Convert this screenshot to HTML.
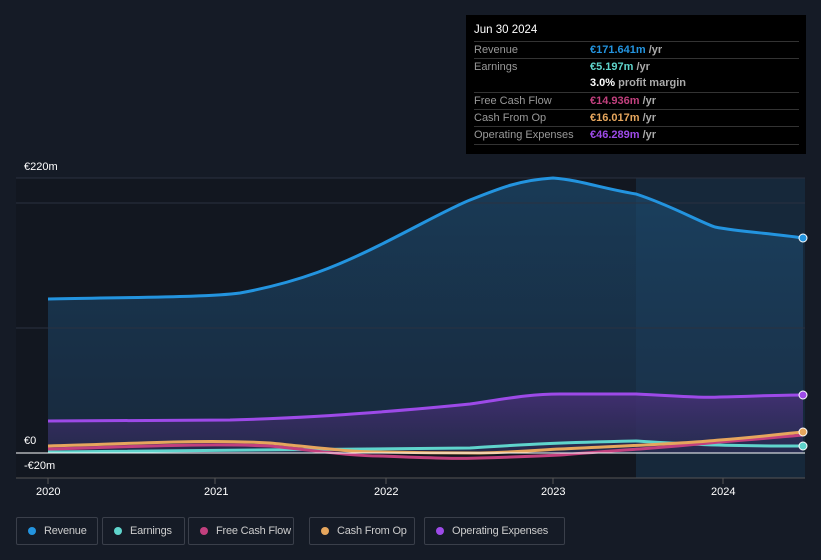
<!DOCTYPE html>
<html><head><meta charset="utf-8"><style>
body{margin:0;background:#151b26;width:821px;height:560px;overflow:hidden;font-family:"Liberation Sans",sans-serif;position:relative}
.tip{position:absolute;left:466px;top:15px;width:340px;height:139px;background:#000;color:#fff;font-size:11px}
.tip .h{position:absolute;left:8px;top:9px;font-size:11.5px}
.row{position:absolute;left:8px;width:325px;border-top:1px solid #333;height:17px;line-height:17px;color:#999}
.row b{position:absolute;left:116px;font-weight:bold}
.row span{color:#aaa}
.lg{position:absolute;top:517px;height:28px;border:1px solid #3a3f4a;border-radius:2px;color:#ccc;font-size:11px;letter-spacing:-0.2px;line-height:26px;box-sizing:border-box;padding-left:27px;white-space:nowrap;overflow:hidden}
.lg i{position:absolute;left:11px;top:9px;width:8px;height:8px;border-radius:50%}
.ax{position:absolute;color:#fff;font-size:11px}
</style></head><body>
<svg width="821" height="560" style="position:absolute;left:0;top:0">
<defs>
<linearGradient id="r" x1="0" y1="0" x2="0" y2="1"><stop offset="0" stop-color="#1c4a6e" stop-opacity=".7"/><stop offset="1" stop-color="#1c3550" stop-opacity=".6"/></linearGradient>
<linearGradient id="o" x1="0" y1="0" x2="0" y2="1"><stop offset="0" stop-color="#4a2f7a" stop-opacity=".8"/><stop offset="1" stop-color="#2e2a55" stop-opacity=".6"/></linearGradient>
</defs>
<rect x="16" y="178" width="620" height="300" fill="#121720"/>
<rect x="636" y="178" width="169" height="300" fill="#16283a"/>
<path d="M48,299 C150,297 210,297 240,293 C300,282 340,265 380,245 C420,225 450,208 470,200 C500,188 520,180 553,178 C580,180 600,188 636,194 C670,205 700,222 715,227 C740,232 770,233 803,238 L803,453 L48,453Z" fill="url(#r)"/>
<path d="M48,421 L230,420 C300,418 340,415 380,412 C430,408 450,406 470,404 C510,398 530,394 560,394 L636,394 C680,396 700,398 720,397 C760,396 780,395 803,395 L803,453 L48,453Z" fill="url(#o)"/>
<g stroke="#2a3140" stroke-width="1"><line x1="16" y1="178" x2="805" y2="178"/><line x1="16" y1="203" x2="805" y2="203"/><line x1="16" y1="328" x2="805" y2="328"/></g>
<line x1="16" y1="478" x2="805" y2="478" stroke="#555" stroke-width="1"/>
<path d="M48,299 C150,297 210,297 240,293 C300,282 340,265 380,245 C420,225 450,208 470,200 C500,188 520,180 553,178 C580,180 600,188 636,194 C670,205 700,222 715,227 C740,232 770,233 803,238" fill="none" stroke="#2394df" stroke-width="3"/>
<path d="M48,421 L230,420 C300,418 340,415 380,412 C430,408 450,406 470,404 C510,398 530,394 560,394 L636,394 C680,396 700,398 720,397 C760,396 780,395 803,395" fill="none" stroke="#9d4ae8" stroke-width="3"/>
<path d="M48,452 C150,451 300,450 470,448 C520,445 540,443 636,441 C670,443 700,446 803,446" fill="none" stroke="#5fd4cc" stroke-width="3"/>
<path d="M48,449 C130,447 200,443 270,446 C320,451 350,456 380,456 C430,458 460,459 480,458 C520,457 540,456 560,455 C600,452 620,450 640,449 C680,446 700,444 720,442 C760,439 790,436 803,435" fill="none" stroke="#c2407e" stroke-width="3"/>
<path d="M48,446 C130,444 200,439 270,443 C320,448 350,452 380,452 C430,453 460,453 480,453 C520,452 540,450 560,449 C620,446 680,444 720,440 C760,437 790,433 803,432" fill="none" stroke="#e6a65d" stroke-width="3"/>
<line x1="16" y1="453" x2="805" y2="453" stroke="#fff" stroke-width="1"/>
<circle cx="803" cy="238" r="4" fill="#2394df" stroke="#fff"/>
<circle cx="803" cy="395" r="4" fill="#9d4ae8" stroke="#fff"/>
<circle cx="803" cy="432" r="4" fill="#e6a65d" stroke="#fff"/>
<circle cx="803" cy="446" r="4" fill="#5fd4cc" stroke="#fff"/>
<g stroke="#555"><line x1="48" y1="478" x2="48" y2="484"/><line x1="215" y1="478" x2="215" y2="484"/><line x1="386" y1="478" x2="386" y2="484"/><line x1="553" y1="478" x2="553" y2="484"/><line x1="723" y1="478" x2="723" y2="484"/></g>
</svg>
<div class="ax" style="left:24px;top:161px">€220m</div>
<div class="ax" style="left:24px;top:435px">€0</div>
<div class="ax" style="left:24px;top:460px">-€20m</div>
<div class="ax" style="left:36px;top:486px">2020</div>
<div class="ax" style="left:204px;top:486px">2021</div>
<div class="ax" style="left:374px;top:486px">2022</div>
<div class="ax" style="left:541px;top:486px">2023</div>
<div class="ax" style="left:711px;top:486px">2024</div>
<div class="tip">
<div class="h">Jun 30 2024</div>
<div class="row" style="top:26px">Revenue<b style="color:#2394df">€171.641m <span>/yr</span></b></div>
<div class="row" style="top:43px">Earnings<b style="color:#5fd4cc">€5.197m <span>/yr</span></b></div>
<div class="row" style="top:60px;border:none"><b style="color:#fff">3.0% <span>profit margin</span></b></div>
<div class="row" style="top:77px">Free Cash Flow<b style="color:#c2407e">€14.936m <span>/yr</span></b></div>
<div class="row" style="top:94px">Cash From Op<b style="color:#e6a65d">€16.017m <span>/yr</span></b></div>
<div class="row" style="top:111px">Operating Expenses<b style="color:#9d4ae8">€46.289m <span>/yr</span></b></div>
<div class="row" style="top:129px;height:0"></div>
</div>
<div class="lg" style="left:16px;width:82px"><i style="background:#2394df"></i>Revenue</div>
<div class="lg" style="left:102px;width:83px"><i style="background:#5fd4cc"></i>Earnings</div>
<div class="lg" style="left:188px;width:106px"><i style="background:#c2407e"></i>Free Cash Flow</div>
<div class="lg" style="left:309px;width:106px"><i style="background:#e6a65d"></i>Cash From Op</div>
<div class="lg" style="left:424px;width:141px"><i style="background:#9d4ae8"></i>Operating Expenses</div>
</body></html>
